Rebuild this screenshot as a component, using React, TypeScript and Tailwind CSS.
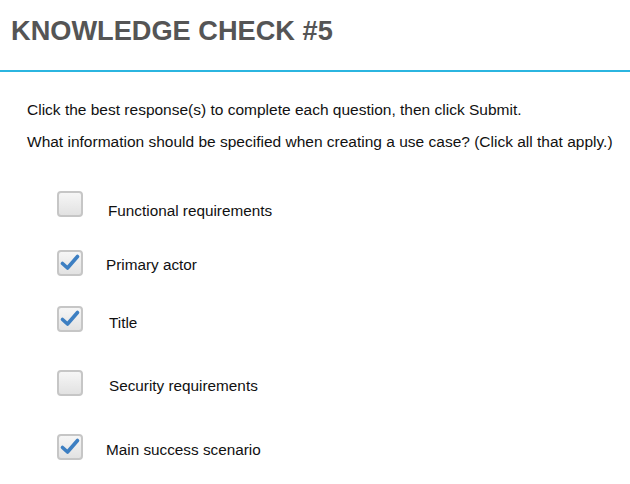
const options = [
  { label: 'Functional requirements', checked: false, top: 'mt-[40px]', textPl: 'pl-[25px]', textMt: 'mt-[11px]' },
  { label: 'Primary actor', checked: true, top: 'mt-[30px]', textPl: 'pl-[23px]', textMt: 'mt-[6px]' },
  { label: 'Title', checked: true, top: 'mt-[30px]', textPl: 'pl-[26px]', textMt: 'mt-[8px]' },
  { label: 'Security requirements', checked: false, top: 'mt-[38px]', textPl: 'pl-[26px]', textMt: 'mt-[7px]' },
  { label: 'Main success scenario', checked: true, top: 'mt-[38px]', textPl: 'pl-[23px]', textMt: 'mt-[7px]' },
];

function Checkbox({ checked }: { checked: boolean }) {
  return (
    <div className="w-[26px] h-[26px] shrink-0 rounded-[4px] border-2 border-[#c6c6c6] bg-gradient-to-b from-[#f6f6f6] to-[#e2e2e2] flex items-center justify-center">
      {checked && (
        <svg width="22" height="22" viewBox="0 0 22 22" className="-mt-[1px]">
          <path d="M3.5 11.5 L8.5 16 L18.5 4.5" fill="none" stroke="#3d7fc2" strokeWidth="3.6" strokeLinecap="round" strokeLinejoin="round" />
        </svg>
      )}
    </div>
  );
}

export default function App() {
  return (
    <div className="w-[630px] h-[484px] bg-white overflow-hidden" style={{ fontFamily: '"Liberation Sans", Arial, sans-serif' }}>
      {/* Header */}
      <div className="h-[72px] border-b-2 border-[#2bb5e0]">
        <h1 className="pl-[11px] pt-[15px] text-[27.2px] leading-[32px] font-bold text-[#555555]">
          KNOWLEDGE CHECK #5
        </h1>
      </div>

      {/* Instructions */}
      <div className="pl-[27px] text-[15.5px] leading-[18px] text-[#111111]">
        <p className="mt-[29px]">Click the best response(s) to complete each question, then click Submit.</p>
        <p className="mt-[14px]">What information should be specified when creating a use case? (Click all that apply.)</p>
      </div>

      {/* Options */}
      <div className="pl-[57px]">
        {options.map((opt) => (
          <div key={opt.label} className={`flex items-start ${opt.top}`}>
            <Checkbox checked={opt.checked} />
            <span className={`${opt.textPl} ${opt.textMt} text-[15.3px] leading-[18px] text-[#111111]`}>
              {opt.label}
            </span>
          </div>
        ))}
      </div>
    </div>
  );
}
